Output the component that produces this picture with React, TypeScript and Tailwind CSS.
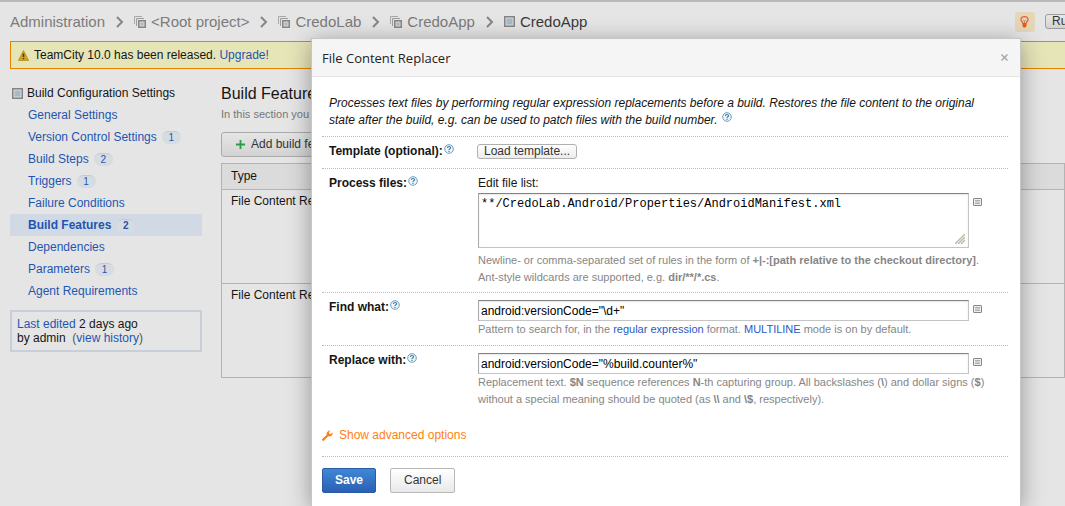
import type { ReactNode } from "react";

const link = "text-[#1f55b0]";

function HelpIcon() {
  return (
    <a href="#help" aria-label="Help" className="ml-px inline-block align-top">
      <svg width="10" height="10" viewBox="0 0 10 10" fill="none">
        <circle cx="5" cy="5" r="4.3" fill="#eef6fb" stroke="#6f9fbe" />
        <path d="M3.4 4C3.4 2.9 4.1 2.5 5 2.5S6.6 3 6.6 3.8C6.6 4.8 5 4.8 5 5.9M5 6.8V7.9" stroke="#3f7ba3" strokeWidth="1.1" />
      </svg>
    </a>
  );
}

function ProjectIcon() {
  return (
    <svg width="12" height="12" viewBox="0 0 12 12" fill="none">
      <path d="M.5 8V.5H8" stroke="#a9a9a9" />
      <path d="M2.5 10V2.5H10" stroke="#9c9c9c" />
      <rect x="4" y="4" width="8" height="8" fill="#858585" />
      <rect x="5.5" y="5.5" width="5" height="5" fill="#dadada" />
      <rect x="6.5" y="6.5" width="3" height="3" fill="#a5b9c6" />
    </svg>
  );
}

function ConfigIcon() {
  return (
    <svg width="11" height="11" viewBox="0 0 11 11" className="shrink-0">
      <rect width="11" height="11" fill="#858585" />
      <rect x="1.5" y="1.5" width="8" height="8" fill="#dcdcdc" />
      <rect x="2.5" y="2.5" width="6" height="6" fill="#a5b9c6" />
    </svg>
  );
}

function Chevron() {
  return (
    <svg width="8" height="12" viewBox="0 0 8 12" fill="none" stroke="#868686" strokeWidth="2">
      <path d="M1 1L6 6L1 11" />
    </svg>
  );
}

function ListButton({ label }: { label: string }) {
  return (
    <button type="button" aria-label={label} className="mt-[5px] ml-1 block h-2 w-[9px]">
      <svg width="9" height="8" viewBox="0 0 9 8">
        <rect x=".5" y=".5" width="8" height="7" rx=".5" fill="#f0f0f0" stroke="#868686" />
        <path d="M2 2.5H7M2 4H7M2 5.5H7" stroke="#a3a8ad" strokeWidth=".9" />
      </svg>
    </button>
  );
}

const crumbs = ["<Root project>", "CredoLab", "CredoApp"];

const navItems: { name: string; count?: number; active?: boolean }[] = [
  { name: "General Settings" },
  { name: "Version Control Settings", count: 1 },
  { name: "Build Steps", count: 2 },
  { name: "Triggers", count: 1 },
  { name: "Failure Conditions" },
  { name: "Build Features", count: 2, active: true },
  { name: "Dependencies" },
  { name: "Parameters", count: 1 },
  { name: "Agent Requirements" },
];

function Breadcrumbs() {
  return (
    <header className="flex h-[41px] items-center justify-between border-t-2 border-[#b9b9b9] pl-[10px]">
      <nav aria-label="Breadcrumb" className="flex items-center text-[15px] text-[#7b7b7b]">
        <a href="#admin">Administration</a>
        {crumbs.map((c) => (
          <span key={c} className="flex items-center">
            <span className="mr-[10px] ml-[11px]"><Chevron /></span>
            <ProjectIcon />
            <a href="#project" className="ml-[5px]">{c}</a>
          </span>
        ))}
        <span className="mr-[10px] ml-[11px]"><Chevron /></span>
        <ConfigIcon />
        <span className="ml-[5px] text-[#3a3a3a]">CredoApp</span>
      </nav>
      <div className="flex items-center gap-[10px] overflow-hidden">
        <button type="button" aria-label="Suggestions" className="flex size-5 items-center justify-center rounded-[3px] bg-[#e6d6b8]">
          <svg width="9" height="12" viewBox="0 0 9 12" fill="none">
            <path d="M3 7.5C3 6.3 1 5.6 1 3.8A3.4 3 0 0 1 8 3.8C8 5.6 6 6.3 6 7.5" stroke="#e3623a" strokeWidth="1.3" />
            <path d="M3 4L4.5 5L6 4M4.5 5V7" stroke="#e3623a" strokeWidth=".7" />
            <path d="M2.5 7H6.5V10L5.5 11.5H3.5L2.5 10Z" fill="#ea5b0c" />
          </svg>
        </button>
        <button type="button" className="-mr-4 h-[15px] rounded-[3px] border border-[#9d9d9d] bg-linear-to-b from-[#e8e8e8] to-[#d2d2d2] px-[6px] leading-[13px] text-[#333]">
          Run
        </button>
      </div>
    </header>
  );
}

function Sidebar() {
  return (
    <aside className="w-48 shrink-0">
      <div className="flex h-[21px] items-center pl-[2px]">
        <ConfigIcon />
        <span className="ml-1">Build Configuration Settings</span>
      </div>
      <nav aria-label="Build configuration">
        {navItems.map((n) => (
          <a
            key={n.name}
            href="#settings"
            className={`flex h-[22px] items-center pl-[18px] ${link} ${n.active ? "bg-[#d1dae4] font-bold" : ""}`}
          >
            {n.name}
            {n.count && (
              <span className="ml-[5px] flex h-[13px] w-[19px] items-center justify-center rounded-full border-t border-[#bccbda] bg-[#d7dce1] text-[10px]">
                {n.count}
              </span>
            )}
          </a>
        ))}
      </nav>
      <p className="mt-2 border-2 border-[#c9cfd8] px-[5px] py-[5px] leading-[14px]">
        <a href="#history" className={link}>Last edited</a> 2 days ago
        <br />
        by admin&nbsp; <span className="text-[#555]">(<a href="#history" className={link}>view history</a>)</span>
      </p>
    </aside>
  );
}

function FeaturesPanel() {
  return (
    <main className="ml-[19px] min-w-0 grow">
      <h1 className="text-[16px] leading-[22px]">Build Features</h1>
      <p className="mt-px text-[11px] leading-4 text-[#777]">In this section you can configure build features.</p>
      <button type="button" className="mt-[10px] flex h-[25px] items-center rounded-[3px] border border-[#aaa] bg-linear-to-b from-[#e5e5e5] to-[#d3d3d3] px-[14px] text-[#333]">
        <svg width="9" height="9" viewBox="0 0 9 9" stroke="#2f9b45" strokeWidth="1.8" className="mr-[6px]">
          <path d="M4.5 0V9M0 4.5H9" />
        </svg>
        Add build feature
      </button>
      <table className="mt-[6px] w-full border-collapse border border-[#b3b3b3]">
        <thead>
          <tr className="h-[26px] bg-[#dbdbdb]">
            <th className="border border-[#b3b3b3] px-[9px] text-left font-normal">Type</th>
          </tr>
        </thead>
        <tbody>
          {["manifest", "version"].map((k) => (
            <tr key={k} className="h-[94px]">
              <td className="border border-[#b3b3b3] px-[9px] pt-1 align-top">File Content Replacer</td>
            </tr>
          ))}
        </tbody>
      </table>
    </main>
  );
}

function Row({ label, id, children, className }: { label: string; id: string; children: ReactNode; className: string }) {
  return (
    <div className={`flex border-t border-dotted border-[#bbb] pt-[7px] ${className}`}>
      <div className="w-[156px] shrink-0 pl-[7px] font-bold">
        <label htmlFor={id}>{label}</label>
        <HelpIcon />
      </div>
      <div className="min-w-0 grow">{children}</div>
    </div>
  );
}

const field =
  "block min-w-0 grow border border-[#c4c4c4] border-t-[#828282] border-l-[#aaa] bg-white px-[2px] text-black shadow-[inset_0_1px_2px_#0000001a]";
const hint = "text-[11px] leading-[17px] text-[#868686]";

function Dialog() {
  return (
    <div
      role="dialog"
      aria-labelledby="dialog-title"
      className="absolute top-[38px] right-[44px] bottom-0 left-[311px] overflow-hidden border border-b-0 border-[#c6c6c6] bg-white shadow-[0_4px_22px_#00000059]"
    >
      <div className="flex h-[38px] items-center justify-between border-b border-[#e5e5e5] bg-[#f5f5f5] pr-3 pl-[10px]">
        <h2 id="dialog-title" className="pt-[2px] font-['Open_Sans',sans-serif] text-[13px] text-[#222]">File Content Replacer</h2>
        <button type="button" aria-label="Close" className="flex size-[7px]">
          <svg width="7" height="7" viewBox="0 0 7 7" stroke="#a8a8a8" strokeWidth="1.5">
            <path d="M.5 .5L6.5 6.5M6.5 .5L.5 6.5" />
          </svg>
        </button>
      </div>
      <form className="pr-3 pl-[10px]" onSubmit={(e) => e.preventDefault()}>
        <p className="px-[7px] pt-[18px] pb-[7px] leading-[17px] italic">
          Processes text files by performing regular expression replacements before a build. Restores the file content to the original state after the build, e.g. can be used to patch files with the build number. <HelpIcon />
        </p>
        <Row label="Template (optional):" id="template" className="h-8">
          <button id="template" type="button" className="-ml-px block h-[15px] rounded-[3px] border border-[#b0b0b0] bg-linear-to-b from-white to-[#ececec] px-[6px] leading-[13px] text-[#333]">
            Load template...
          </button>
        </Row>
        <Row label="Process files:" id="files" className="h-[124px]">
          <div>Edit file list:</div>
          <div className="mt-[2px] flex pr-[26px]">
            <div className="relative flex grow">
              <textarea
                id="files"
                defaultValue="**/CredoLab.Android/Properties/AndroidManifest.xml"
                className={`${field} h-[55px] resize-none overflow-hidden pt-[3px] font-['Liberation_Mono',monospace] text-[12px] leading-[14px]`}
              />
              <svg width="10" height="10" viewBox="0 0 10 10" stroke="#b9b9a8" className="absolute right-1 bottom-1">
                <path d="M0 10L10 0M3 10L10 3M6 10L10 6" strokeWidth="1.4" />
              </svg>
            </div>
            <ListButton label="Choose files" />
          </div>
          <p className={`mt-1 ${hint}`}>
            Newline- or comma-separated set of rules in the form of <b>+|-:[path relative to the checkout directory]</b>.
            <br />
            Ant-style wildcards are supported, e.g. <b>dir/**/*.cs</b>.
          </p>
        </Row>
        <Row label="Find what:" id="find" className="h-[53px]">
          <div className="flex pr-[26px]">
            <input id="find" type="text" defaultValue={'android:versionCode="\\d+"'} className={`${field} h-[21px]`} />
            <ListButton label="Choose search pattern" />
          </div>
          <p className={hint}>
            Pattern to search for, in the <a href="#regex" className="text-[#1f5bc4]">regular expression</a> format.{" "}
            <a href="#multiline" className="text-[#1f5bc4]">MULTILINE</a> mode is on by default.
          </p>
        </Row>
        <Row label="Replace with:" id="replace" className="h-[77px]">
          <div className="flex pr-[26px]">
            <input id="replace" type="text" defaultValue={'android:versionCode="%build.counter%"'} className={`${field} h-[21px]`} />
            <ListButton label="Choose replacement" />
          </div>
          <p className={hint}>
            Replacement text. <b>$N</b> sequence references <b>N</b>-th capturing group. All backslashes (<b>\</b>) and dollar signs (<b>$</b>)
            <br />
            without a special meaning should be quoted (as <b>\\</b> and <b>\$</b>, respectively).
          </p>
        </Row>
        <button type="button" className="mt-[6px] flex h-[15px] items-center text-[#ff7f11]">
          <svg width="11" height="11" viewBox="0 0 11 11" className="mr-[6px]">
            <path d="M0 9.3L4.6 4.9C4.2 2.6 5.8.3 8.4.4L6.9 2.2L7.3 3.7L8.8 4L10.8 2.4C11 5.2 8.6 6.8 6.2 6.3L1.8 10.8C.8 11.4-.4 10.3 0 9.3Z" fill="#ff7f11" />
          </svg>
          Show advanced options
        </button>
        <div className="mt-[13px] flex gap-[14px] border-t border-dotted border-[#bbb] pt-[11px]">
          <button type="submit" className="h-[25px] rounded-[2px] border border-[#2a5ba9] bg-linear-to-b from-[#3f88d6] to-[#2c5fb4] px-3 font-bold text-white">
            Save
          </button>
          <button type="button" className="h-[25px] rounded-[2px] border border-[#b8b8b8] bg-linear-to-b from-white to-[#e9e9e9] px-[13px] text-[#333]">
            Cancel
          </button>
        </div>
      </form>
    </div>
  );
}

export default function App() {
  return (
    <div className="relative h-screen min-h-[500px] overflow-hidden bg-[#e5e5e5] font-['Liberation_Sans',Arial,sans-serif] text-[12px] leading-[15px] text-[#151515]">
      <Breadcrumbs />
      <div className="ml-[10px] flex h-7 items-center border border-r-0 border-[#e68200] bg-[#e6e5b8] pl-[7px]">
        <svg width="11" height="11" viewBox="0 0 11 11" className="mr-[5px]">
          <path d="M5.5 .5L10.7 10.5H.3Z" fill="#d3a21f" stroke="#b98e22" strokeWidth=".8" strokeLinejoin="round" />
          <path d="M5.5 3.5V7M5.5 8V9.3" stroke="#4d3b0c" strokeWidth="1.5" />
        </svg>
        <span>TeamCity 10.0 has been released. <a href="#upgrade" className={link}>Upgrade!</a></span>
      </div>
      <div className="mt-[14px] ml-[10px] flex">
        <Sidebar />
        <FeaturesPanel />
      </div>
      <Dialog />
    </div>
  );
}
